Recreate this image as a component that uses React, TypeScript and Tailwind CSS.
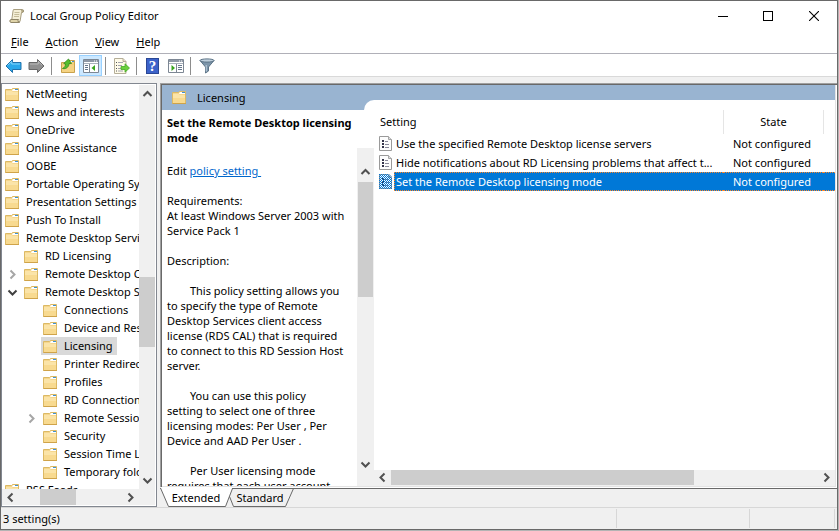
import type { ReactNode } from 'react';
import clsx from 'clsx';

type Direction = 'up' | 'down' | 'left' | 'right';

type TreeNode = {
  label: string;
  level: 0 | 1 | 2;
  expander?: 'open' | 'closed';
  selected?: boolean;
};

const treeNodes: TreeNode[] = [
  { label: 'NetMeeting', level: 0 },
  { label: 'News and interests', level: 0 },
  { label: 'OneDrive', level: 0 },
  { label: 'Online Assistance', level: 0 },
  { label: 'OOBE', level: 0 },
  { label: 'Portable Operating System', level: 0 },
  { label: 'Presentation Settings', level: 0 },
  { label: 'Push To Install', level: 0 },
  { label: 'Remote Desktop Services', level: 0 },
  { label: 'RD Licensing', level: 1 },
  { label: 'Remote Desktop Connection Client', level: 1, expander: 'closed' },
  { label: 'Remote Desktop Session Host', level: 1, expander: 'open' },
  { label: 'Connections', level: 2 },
  { label: 'Device and Resource Redirection', level: 2 },
  { label: 'Licensing', level: 2, selected: true },
  { label: 'Printer Redirection', level: 2 },
  { label: 'Profiles', level: 2 },
  { label: 'RD Connection Broker', level: 2 },
  { label: 'Remote Session Environment', level: 2, expander: 'closed' },
  { label: 'Security', level: 2 },
  { label: 'Session Time Limits', level: 2 },
  { label: 'Temporary folders', level: 2 },
  { label: 'RSS Feeds', level: 0 },
];

const settings = [
  { name: 'Use the specified Remote Desktop license servers', state: 'Not configured' },
  { name: 'Hide notifications about RD Licensing problems that affect t...', state: 'Not configured' },
  { name: 'Set the Remote Desktop licensing mode', state: 'Not configured', selected: true },
];

const description = `Requirements:
At least Windows Server 2003 with
Service Pack 1

Description:

        This policy setting allows you
to specify the type of Remote
Desktop Services client access
license (RDS CAL) that is required
to connect to this RD Session Host
server.

        You can use this policy
setting to select one of three
licensing modes: Per User , Per
Device and AAD Per User .

        Per User licensing mode
requires that each user account`;

const menus = ['File', 'Action', 'View', 'Help'];

const chevronPaths: Record<Direction, string> = {
  up: 'M1.5 8 L5.5 4 L9.5 8',
  down: 'M1.5 3.5 L5.5 7.5 L9.5 3.5',
  left: 'M7.5 1.5 L3.5 5.5 L7.5 9.5',
  right: 'M3.5 1.5 L7.5 5.5 L3.5 9.5',
};

function Chevron({ direction, className }: { direction: Direction; className?: string }) {
  return (
    <svg viewBox="0 0 11 11" className={clsx('shrink-0', className)} fill="none" stroke="currentColor" strokeWidth="2">
      <path d={chevronPaths[direction]} />
    </svg>
  );
}

function FolderIcon() {
  return (
    <svg viewBox="0 0 15 15" className="h-[15px] w-[15px] shrink-0">
      <path d="M0.5 13.5V2.5H6.5L7.5 1.5H13.5V13.5Z" fill="#f5d68d" stroke="#dcb964" />
      <path d="M8 2H13V4H7Z" fill="#fff" />
      <path d="M10 2.5H13" stroke="#3f92d2" />
      <path d="M1 4H6.5L8 5H13V9H1Z" fill="#fbe4a8" />
      <path d="M1 8H13V13H1Z" fill="#f8da90" />
      <path d="M0.5 13.5H14" stroke="#cfa349" />
    </svg>
  );
}

function ScrollIcon() {
  return (
    <svg viewBox="0 0 16 16" className="h-4 w-4">
      <path d="M4.5 1.5H13.5C15 1.5 15 4.5 13.5 4.5H12.5L11 13.5H2.5L4 3Z" fill="#f4eed6" stroke="#a89e80" />
      <path d="M2 11.5H9.5C8.5 12 9 14.5 10.5 14.5H2C0.5 14.5 0.5 11.5 2 11.5Z" fill="#dfd3a8" stroke="#8e8466" />
      <path d="M12 2.5C12.5 2 14 2 14 3.2S13 4.5 12.5 4" fill="#c9bd92" stroke="#8e8466" strokeWidth="0.7" />
      <path d="M5.5 4.5H10.5M5.3 6.5H10.3M5 8.5H10" stroke="#c4bb99" />
    </svg>
  );
}

function ArrowIcon({ forward = false }: { forward?: boolean }) {
  return (
    <svg viewBox="0 0 17 16" className="h-4 w-[17px]">
      {forward ? (
        <>
          <path d="M16 8L9.5 1.5V4.5H1V11.5H9.5V14.5Z" fill="#909090" stroke="#686868" />
          <path d="M2 6H10.3V3.5L14 7.2" fill="none" stroke="#b9b9b9" />
        </>
      ) : (
        <>
          <path d="M1 8L7.5 1.5V4.5H16V11.5H7.5V14.5Z" fill="#29a8ea" stroke="#2272ab" />
          <path d="M2.7 7.4L6.7 3.4V6H15" fill="none" stroke="#83d5fa" />
        </>
      )}
    </svg>
  );
}

function FolderUpIcon() {
  return (
    <svg viewBox="0 0 16 16" className="h-4 w-4">
      <path d="M1.5 14.5V4.5H8L9 2.5H14.5V14.5Z" fill="#f2cf7b" stroke="#c9a24c" />
      <path d="M10 3.5H14" stroke="#fff" />
      <path d="M12 3.5H14" stroke="#3f92d2" />
      <path d="M2 7H14V14H2Z" fill="#f5d383" />
      <path d="M2.5 10.5C4.5 9.5 5.5 8 5.5 6L3.7 5.5L8.5 1L11.5 5.5H9C9 8.5 6.5 11.5 2.5 10.5Z" fill="#56bd2e" stroke="#318a1c" strokeWidth="0.8" />
    </svg>
  );
}

function PaneIcon({ side }: { side: 'left' | 'right' }) {
  return (
    <svg viewBox="0 0 16 14" className="h-[14px] w-4">
      <path d="M0.5 0.5H15.5V13.5H0.5Z" fill="#fff" stroke="#7d8794" />
      <path d="M1 1H15V3H1Z" fill="#8e98a6" />
      <path d="M11 2H12M13 2H14" stroke="#fff" />
      <path d="M1 4.5H15" stroke="#a9b1bc" />
      {side === 'left' ? (
        <>
          <path d="M6.5 5V13" stroke="#7d8794" />
          <path d="M2 6.5H5M2 8.5H5M2 10.5H5" stroke="#66778c" />
          <path d="M12 6V12L8.5 9Z" fill="#38a51d" />
        </>
      ) : (
        <>
          <path d="M8.5 5V13" stroke="#7d8794" />
          <path d="M10 6.5H14M10 8.5H14M10 10.5H14" stroke="#66778c" />
          <path d="M3.5 6V12L7 9Z" fill="#38a51d" />
        </>
      )}
    </svg>
  );
}

function ExportIcon() {
  return (
    <svg viewBox="0 0 16 16" className="h-4 w-4">
      <path d="M0.5 0.5H9L12 3.5V15.5H0.5Z" fill="#fffbe9" stroke="#b5ae98" />
      <path d="M9 0.5V3.5H12" fill="#e5dfc8" stroke="#b5ae98" />
      <path d="M2 4.5H3M2 7.5H3M2 10.5H3M2 13H3" stroke="#555" />
      <path d="M4 4.5H9M4 7.5H8M4 10.5H7M4 13H9" stroke="#a4a4b0" />
      <path d="M7 8.5H11V5.8L15.5 10L11 14.2V11.5H7Z" fill="#6ad03d" stroke="#42a923" strokeWidth="0.8" />
    </svg>
  );
}

function HelpIcon() {
  return (
    <span className="flex h-4 w-[13px] items-center justify-center border border-[#2a4795] bg-[#3c62c9] font-['Liberation_Serif',serif] text-[15px] leading-4 font-bold text-white">
      ?
    </span>
  );
}

function FilterIcon() {
  return (
    <svg viewBox="0 0 16 16" className="h-4 w-4">
      <path d="M1 2.5L6.5 9V15L9.5 13V9L15 2.5Z" fill="#7c95aa" stroke="#5c7386" />
      <path d="M7.2 7V13.5" stroke="#c1d3e0" />
      <ellipse cx="8" cy="2.5" rx="7" ry="1.6" fill="#bfd0dd" stroke="#5c7386" />
    </svg>
  );
}

function SettingIcon({ selected }: { selected?: boolean }) {
  return (
    <svg viewBox="0 0 13 15" className="h-[15px] w-[13px]">
      <path d="M0.5 0.5H9.5L12.5 3.5V14.5H0.5Z" fill="#fdfdfd" stroke="#9a9a9a" />
      <path d="M9.5 0.5V3.5H12.5" fill="#ddd" stroke="#a5a5a5" />
      <path d="M3 4H5V6H3ZM3 7H5V9H3ZM3 10H5V12H3Z" fill="#34344a" />
      <path d="M6 5.5H9M6 8.5H10M6 11.5H10" stroke="#8a8a9c" />
      {selected && (
        <>
          <defs>
            <pattern id="selected-dither" width="2" height="2" patternUnits="userSpaceOnUse">
              <path d="M0 0H1V1H0ZM1 1H2V2H1Z" fill="#0078d7" />
            </pattern>
          </defs>
          <path d="M0 0H10L13 3V15H0Z" fill="url(#selected-dither)" />
        </>
      )}
    </svg>
  );
}

function ToolButton({ label, active, children }: { label: string; active?: boolean; children: ReactNode }) {
  return (
    <button
      type="button"
      aria-label={label}
      className={clsx(
        'flex h-[21px] w-[23px] items-center justify-center border pt-px',
        active ? 'border-[#99d1ff] bg-[#cce8ff]' : 'border-transparent',
      )}
    >
      {children}
    </button>
  );
}

function ToolSeparator() {
  return <span className="mr-1 ml-[3px] h-[18px] w-px bg-[#8d8d8d]" />;
}

function ScrollButton({ direction, className }: { direction: Direction; className: string }) {
  return (
    <button
      type="button"
      aria-label={`Scroll ${direction}`}
      className={clsx('flex shrink-0 items-center justify-center text-[#505050]', className)}
    >
      <Chevron direction={direction} className="h-[11px] w-[11px]" />
    </button>
  );
}

function TitleBar() {
  return (
    <header className="flex h-[30px] shrink-0 items-center bg-white pl-2">
      <ScrollIcon />
      <h1 className="flex-1 pl-[5px]">Local Group Policy Editor</h1>
      <button type="button" aria-label="Minimize" className="flex h-full w-[45px] items-center justify-center">
        <span className="h-px w-[10px] bg-black" />
      </button>
      <button type="button" aria-label="Maximize" className="flex h-full w-[46px] items-center justify-center">
        <span className="h-[10px] w-[10px] border border-black" />
      </button>
      <button type="button" aria-label="Close" className="flex h-full w-[46px] items-center justify-center">
        <svg viewBox="0 0 10 10" className="h-[10px] w-[10px]" stroke="#000" strokeWidth="1.1">
          <path d="M0 0L10 10M10 0L0 10" />
        </svg>
      </button>
    </header>
  );
}

function TreeRow({ node }: { node: TreeNode }) {
  return (
    <li className={clsx('flex h-[18px] items-center', node.level === 2 ? 'pl-5' : 'pl-px')}>
      {node.level > 0 && (
        <span className="flex w-[19px] shrink-0 justify-center">
          {node.expander && (
            <button
              type="button"
              aria-label={`Toggle ${node.label}`}
              className={node.expander === 'open' ? 'text-[#404040]' : 'text-[#a6a6a6]'}
            >
              <Chevron direction={node.expander === 'open' ? 'down' : 'right'} className="h-[11px] w-[11px]" />
            </button>
          )}
        </span>
      )}
      <button
        type="button"
        className={clsx('flex h-[18px] items-center gap-[6px] pr-1 pl-[2px]', node.selected && 'bg-[#d9d9d9]')}
      >
        <FolderIcon />
        {node.label}
      </button>
    </li>
  );
}

function TreePanel() {
  return (
    <nav className="flex w-[156px] shrink-0 flex-col border border-[#828790] bg-white p-px pl-0">
      <div className="flex min-h-0 flex-1">
        <ul className="min-w-0 flex-1 overflow-hidden whitespace-nowrap">
          {treeNodes.map((node) => (
            <TreeRow key={node.label} node={node} />
          ))}
        </ul>
        <div className="flex w-4 shrink-0 flex-col bg-[#f0f0f0]">
          <ScrollButton direction="up" className="h-[17px]" />
          <div className="flex-[175]" />
          <div className="flex-[69] bg-[#cdcdcd]" />
          <div className="flex-[125]" />
          <ScrollButton direction="down" className="h-[17px]" />
        </div>
      </div>
      <div className="flex h-4 shrink-0 bg-[#f0f0f0]">
        <ScrollButton direction="left" className="w-[17px]" />
        <div className="flex-[21]" />
        <div className="flex-[35] bg-[#cdcdcd]" />
        <div className="flex-[46]" />
        <ScrollButton direction="right" className="w-[17px]" />
        <span className="w-4" />
      </div>
    </nav>
  );
}

function DescriptionPane() {
  return (
    <section className="flex w-[212px] shrink-0 flex-col bg-white pt-[5px]">
      <h2 className="pl-[5px] leading-[15px] font-bold whitespace-nowrap">
        Set the Remote Desktop licensing
        <br />
        mode
      </h2>
      <div className="mt-[3px] flex min-h-0 flex-1">
        <div className="min-w-0 flex-1 overflow-hidden pt-[15px] pl-[5px] leading-[15px] whitespace-pre">
          <p>
            Edit{' '}
            <a href="#policy-setting" className="text-[#0066cc] underline">
              {'policy setting '}
            </a>
          </p>
          <p className="mt-[15px]">{description}</p>
        </div>
        <div className="flex w-[17px] shrink-0 flex-col bg-[#f0f0f0] px-px pt-[13px] pb-[13px]">
          <ScrollButton direction="up" className="h-[21px]" />
          <div className="flex-[114] bg-[#cdcdcd]" />
          <div className="flex-[158]" />
          <ScrollButton direction="down" className="h-[17px]" />
        </div>
      </div>
    </section>
  );
}

function SettingsList() {
  return (
    <section className="flex min-w-0 flex-1 flex-col bg-white">
      <div className="min-h-0 flex-1 overflow-hidden">
        <table className="w-full table-fixed border-separate border-spacing-0 text-left whitespace-nowrap">
          <colgroup>
            <col className="w-5" />
            <col />
            <col className="w-[100px]" />
            <col className="w-3" />
          </colgroup>
          <thead>
            <tr className="h-6">
              <th colSpan={2} className="p-0 pl-[6px] font-normal">Setting</th>
              <th className="border-l border-[#e5e5e5] p-0 text-center font-normal">State</th>
              <th aria-hidden="true" className="border-l border-[#e5e5e5] p-0" />
            </tr>
          </thead>
          <tbody>
            {settings.map((setting) => {
              const cell = clsx(
                'p-0',
                setting.selected && 'border-y border-dotted border-[#ff8728] bg-[#0078d7] text-white',
              );
              return (
                <tr key={setting.name} className="h-[19px]">
                  <td className="p-0 pl-[5px]">
                    <SettingIcon selected={setting.selected} />
                  </td>
                  <td className={clsx(cell, setting.selected ? 'border-l pl-px' : 'pl-[2px]')}>{setting.name}</td>
                  <td className={clsx(cell, 'pl-[10px]')}>{setting.state}</td>
                  <td className={cell} />
                </tr>
              );
            })}
          </tbody>
        </table>
      </div>
      <div className="flex h-4 shrink-0 bg-[#f0f0f0] pb-px">
        <ScrollButton direction="left" className="w-[17px]" />
        <div className="flex-[303] bg-[#cdcdcd]" />
        <div className="flex-[124]" />
        <ScrollButton direction="right" className="w-[17px]" />
      </div>
    </section>
  );
}

function ViewTabs() {
  return (
    <div role="tablist" className="relative flex h-[19px] shrink-0 border-t border-[#696969]">
      <svg viewBox="0 0 136 20" className="absolute -top-[2px] left-0 h-5 w-[136px]" fill="none">
        <path d="M0 0H72.5L65.5 19.5H8.5Z" fill="#fff" />
        <path d="M0.5 1L8.5 19.5H65.5L72.5 1.5H136" stroke="#696969" />
        <path d="M69.5 9.5L73.5 19.5H125.5L133.5 1.5" stroke="#696969" />
      </svg>
      <button type="button" role="tab" aria-selected="true" className="relative w-[72px] text-center">
        Extended
      </button>
      <button type="button" role="tab" aria-selected="false" className="relative w-[56px] text-center">
        Standard
      </button>
    </div>
  );
}

function ContentPanel() {
  return (
    <main className="flex min-w-0 flex-1 flex-col">
      <div className="flex min-h-0 flex-1 flex-col border-t border-l border-[#a0a0a0]">
        <div className="flex min-h-0 flex-1 flex-col border-t border-l border-t-[#696969] border-l-[#696969] bg-white pr-px pb-px">
          <div className="flex min-h-0 flex-1 flex-col border-r border-b border-[#e3e3e3]">
            <div className="flex h-[25px] shrink-0 items-end bg-[#99b4d1]">
              <div className="flex h-full w-[202px] items-center gap-[10px] pl-[10px]">
                <FolderIcon />
                Licensing
              </div>
              <div className="h-[10px] flex-1 rounded-tl-[10px] bg-white" />
            </div>
            <div className="flex min-h-0 flex-1">
              <DescriptionPane />
              <SettingsList />
            </div>
          </div>
        </div>
      </div>
      <ViewTabs />
    </main>
  );
}

export default function App() {
  return (
    <div className="h-screen w-full bg-[#b4b4b4] pr-px pb-px font-['Noto_Sans',sans-serif] text-[11px] leading-4 text-black">
      <div className="flex h-full flex-col overflow-hidden border border-[#696969] bg-[#f0f0f0]">
        <TitleBar />
        <div role="menubar" className="flex h-[23px] shrink-0 items-center gap-px border-b border-[#b0b0b8] bg-white pl-[2px]">
          {menus.map((menu) => (
            <button key={menu} type="button" role="menuitem" className="px-2">
              <span className="underline">{menu[0]}</span>
              {menu.slice(1)}
            </button>
          ))}
        </div>
        <div role="toolbar" className="flex h-[23px] shrink-0 items-center border-b border-[#d9d9d9] bg-white pt-px pl-px">
          <ToolButton label="Back"><ArrowIcon /></ToolButton>
          <ToolButton label="Forward"><ArrowIcon forward /></ToolButton>
          <ToolSeparator />
          <ToolButton label="Up one level"><FolderUpIcon /></ToolButton>
          <ToolButton label="Show console tree" active><PaneIcon side="left" /></ToolButton>
          <ToolSeparator />
          <ToolButton label="Export list"><ExportIcon /></ToolButton>
          <ToolSeparator />
          <ToolButton label="Help"><HelpIcon /></ToolButton>
          <ToolButton label="Show action pane"><PaneIcon side="right" /></ToolButton>
          <ToolSeparator />
          <ToolButton label="Filter"><FilterIcon /></ToolButton>
        </div>
        <div className="flex min-h-0 flex-1 gap-[3px] pt-[6px]">
          <TreePanel />
          <ContentPanel />
        </div>
        <footer className="flex h-[22px] shrink-0 border-t border-[#d7d7d7] py-px pr-[2px]">
          <span className="flex flex-1 items-center border-r border-[#d7d7d7] pl-[2px]">3 setting(s)</span>
          <span className="w-[133px] border-r border-[#d7d7d7]" />
          <span className="w-[85px] border-r border-[#d7d7d7]" />
        </footer>
      </div>
    </div>
  );
}
